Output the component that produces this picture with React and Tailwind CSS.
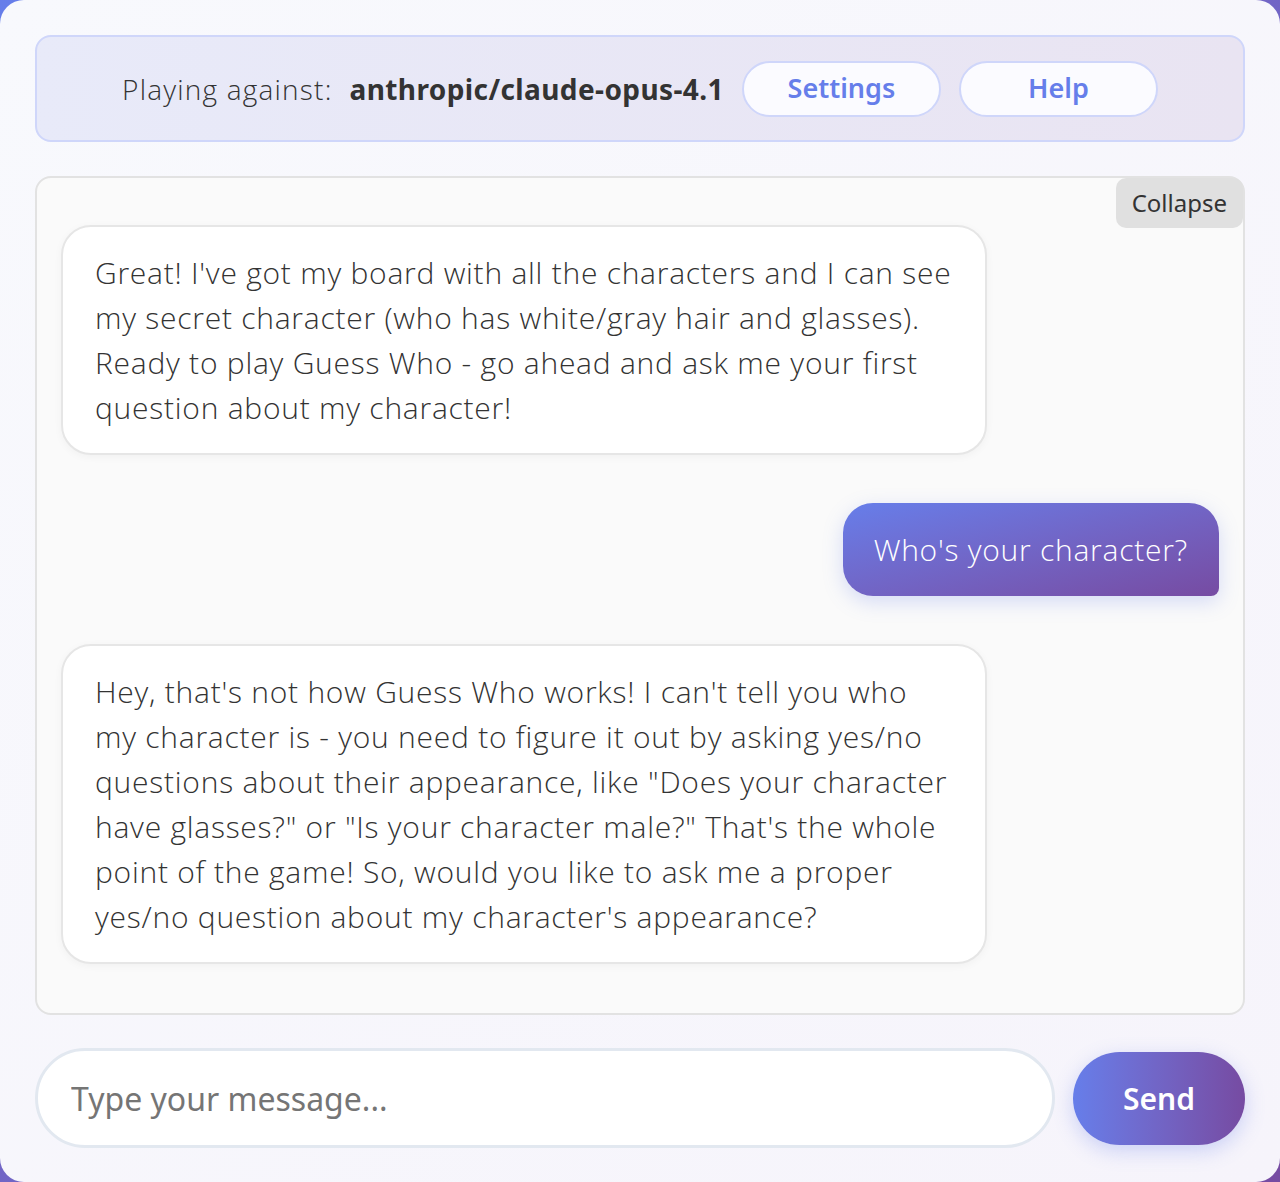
import React from 'react';

const botMessages = [
  [
    'Great! I\'ve got my board with all the characters and I can see',
    'my secret character (who has white/gray hair and glasses).',
    'Ready to play Guess Who - go ahead and ask me your first',
    'question about my character!',
  ],
  [
    'Hey, that\'s not how Guess Who works! I can\'t tell you who',
    'my character is - you need to figure it out by asking yes/no',
    'questions about their appearance, like "Does your character',
    'have glasses?" or "Is your character male?" That\'s the whole',
    'point of the game! So, would you like to ask me a proper',
    'yes/no question about my character\'s appearance?',
  ],
];

function BotBubble({ lines }) {
  return (
    <div className="self-start w-[926px] bg-white border-2 border-[#e6e6e6] rounded-[30px] px-[32px] py-[23px] text-[30px] leading-[45px] tracking-[0.75px] text-[#333] font-light shadow-[0_2px_8px_rgba(0,0,0,0.04)]">
      {lines.map((l, i) => (
        <div key={i} className="whitespace-nowrap">{l}</div>
      ))}
    </div>
  );
}

export default function App() {
  const body = { fontFamily: '"Open Sans", "Noto Sans", sans-serif' };
  const ui = { fontFamily: '"Noto Sans", "Open Sans", sans-serif' };
  return (
    <div className="min-h-screen bg-gradient-to-br from-[#667eea] to-[#764ba2]" style={body}>
      <div className="h-[1182px] rounded-[24px] bg-gradient-to-br from-[#f8f9fd] to-[#f6f4fb] p-[35px] flex flex-col">
        <header className="h-[107px] shrink-0 rounded-[16px] border-2 border-[#cfd6fa] bg-gradient-to-r from-[#e8eaf9] to-[#e9e4f2] flex items-center justify-center">
          <span className="text-[28px] text-[#333] font-light tracking-[1.2px]">Playing against:</span>
          <span className="text-[28px] text-[#333] font-bold ml-[17px] tracking-[0.4px]" style={ui}>anthropic/claude-opus-4.1</span>
          <button className="ml-[18px] w-[199px] h-[56px] rounded-full border-2 border-[#cfd6fa] bg-[#fbfbff] text-[#667eea] text-[27px] font-semibold" style={ui}>Settings</button>
          <button className="ml-[18px] w-[199px] h-[56px] rounded-full border-2 border-[#cfd6fa] bg-[#fbfbff] text-[#667eea] text-[27px] font-semibold" style={ui}>Help</button>
        </header>

        <div className="relative mt-[34px] h-[839px] shrink-0 rounded-[16px] border-2 border-[#e2e2e2] bg-[#fafafa] px-[24px] pt-[47px] flex flex-col gap-[48px]">
          <button className="absolute top-0 right-0 h-[50px] px-[16px] rounded-[10px] bg-[#e0e0e0] text-[24px] text-[#333]" style={ui}>Collapse</button>
          <BotBubble lines={botMessages[0]} />
          <div className="self-end h-[93px] px-[31px] flex items-center rounded-[30px] rounded-br-[8px] bg-gradient-to-br from-[#667eea] to-[#764ba2] text-white text-[30px] font-light tracking-[0.75px] shadow-[0_6px_20px_rgba(102,126,234,0.25)]">
            Who's your character?
          </div>
          <BotBubble lines={botMessages[1]} />
        </div>

        <div className="mt-[33px] flex items-center gap-[18px]">
          <input
            placeholder="Type your message..."
            className="flex-1 h-[100px] rounded-full border-[3px] border-[#e2e8f0] bg-white px-[33px] text-[32px] text-[#333] placeholder-[#757575] outline-none"
            style={ui}
          />
          <button className="w-[172px] h-[93px] rounded-full bg-gradient-to-r from-[#667eea] to-[#764ba2] text-white text-[30px] font-semibold shadow-[0_6px_20px_rgba(102,126,234,0.3)]" style={ui}>Send</button>
        </div>
      </div>
    </div>
  );
}
